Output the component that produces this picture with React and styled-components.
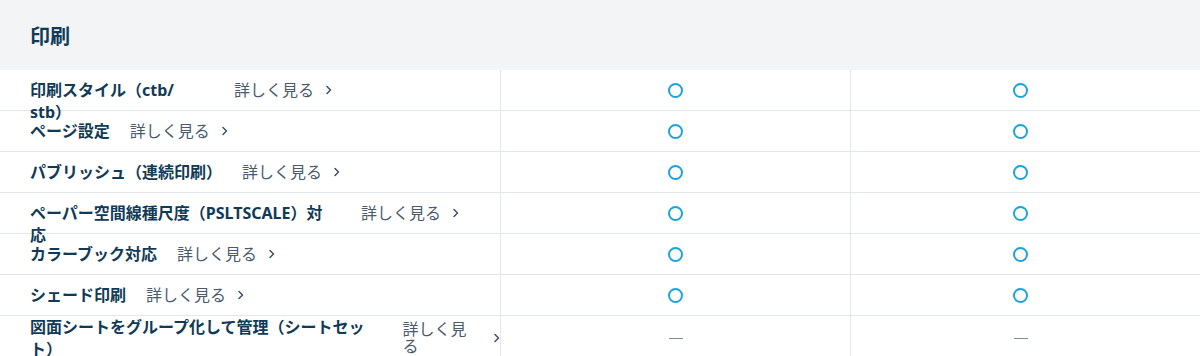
import React from 'react';
import styled, { createGlobalStyle } from 'styled-components';

const GlobalStyle = createGlobalStyle`
  body {
    margin: 0;
    background: #fff;
    font-family: "Noto Sans", "Noto Sans CJK JP", sans-serif;
  }
`;

const Section = styled.section`
  width: 1200px;
`;

const Heading = styled.h2`
  margin: 0;
  height: 70px;
  display: flex;
  align-items: center;
  padding-left: 30px;
  background: #f2f4f6;
  color: #113a56;
  font-size: 20px;
  font-weight: 700;
`;

const Row = styled.div`
  display: grid;
  grid-template-columns: 501px 350px 1fr;
  height: 41px;
  box-sizing: border-box;
  border-bottom: 1px solid #e3e7e9;
`;

const NameCell = styled.div`
  display: flex;
  align-items: center;
  gap: 20px;
  padding-left: 30px;
  border-right: 1px solid #e3e7e9;
  min-width: 0;
`;

const Label = styled.span`
  flex: 0 1 auto;
  width: ${(p) => p.$w || 'auto'};
  height: ${(p) => (p.$spill ? '22px' : 'auto')};
  color: #113a56;
  font-size: 16px;
  font-weight: 700;
  line-height: 22px;
`;

const More = styled.a`
  flex: 0 1 auto;
  min-width: 0;
  display: inline-flex;
  align-items: center;
  gap: 12px;
  color: #4a5a6b;
  font-size: 16px;
  line-height: 17px;
  text-decoration: none;
  cursor: pointer;
`;

const MoreText = styled.span`
  min-width: 0;
`;

const ValueCell = styled.div`
  display: flex;
  align-items: center;
  justify-content: center;
  padding-right: ${(p) => (p.$last ? '10px' : '0')};
  border-right: ${(p) => (p.$last ? 'none' : '1px solid #e3e7e9')};
`;

const Circle = styled.span`
  width: 11px;
  height: 11px;
  border: 2px solid #1ba3dc;
  border-radius: 50%;
`;

const Dash = styled.span`
  width: 14px;
  height: 1px;
  background: #7f8c99;
`;

const Chevron = () => (
  <svg width="6" height="10" viewBox="0 0 6 10" fill="none">
    <path d="M1 1.5L4.5 5L1 8.5" stroke="#3f5162" strokeWidth="1.5" strokeLinecap="round" strokeLinejoin="round" />
  </svg>
);

const rows = [
  { label: <>印刷スタイル（ctb/<br />stb）</>, w: '184px', spill: true, a: true, b: true },
  { label: 'ページ設定', a: true, b: true },
  { label: 'パブリッシュ（連続印刷）', a: true, b: true },
  { label: <>ペーパー空間線種尺度（PSLTSCALE）対<br />応</>, w: '311px', spill: true, a: true, b: true },
  { label: 'カラーブック対応', a: true, b: true },
  { label: 'シェード印刷', a: true, b: true },
  { label: '図面シートをグループ化して管理（シートセット）', w: '354px', a: false, b: false },
];

const Mark = ({ on }) => (on ? <Circle /> : <Dash />);

export default function App() {
  return (
    <>
      <GlobalStyle />
      <Section>
        <Heading>印刷</Heading>
        {rows.map((r, i) => (
          <Row key={i}>
            <NameCell>
              <Label $w={r.w} $spill={r.spill}>{r.label}</Label>
              <More>
                <MoreText>詳しく見る</MoreText>
                <Chevron />
              </More>
            </NameCell>
            <ValueCell>
              <Mark on={r.a} />
            </ValueCell>
            <ValueCell $last>
              <Mark on={r.b} />
            </ValueCell>
          </Row>
        ))}
      </Section>
    </>
  );
}
